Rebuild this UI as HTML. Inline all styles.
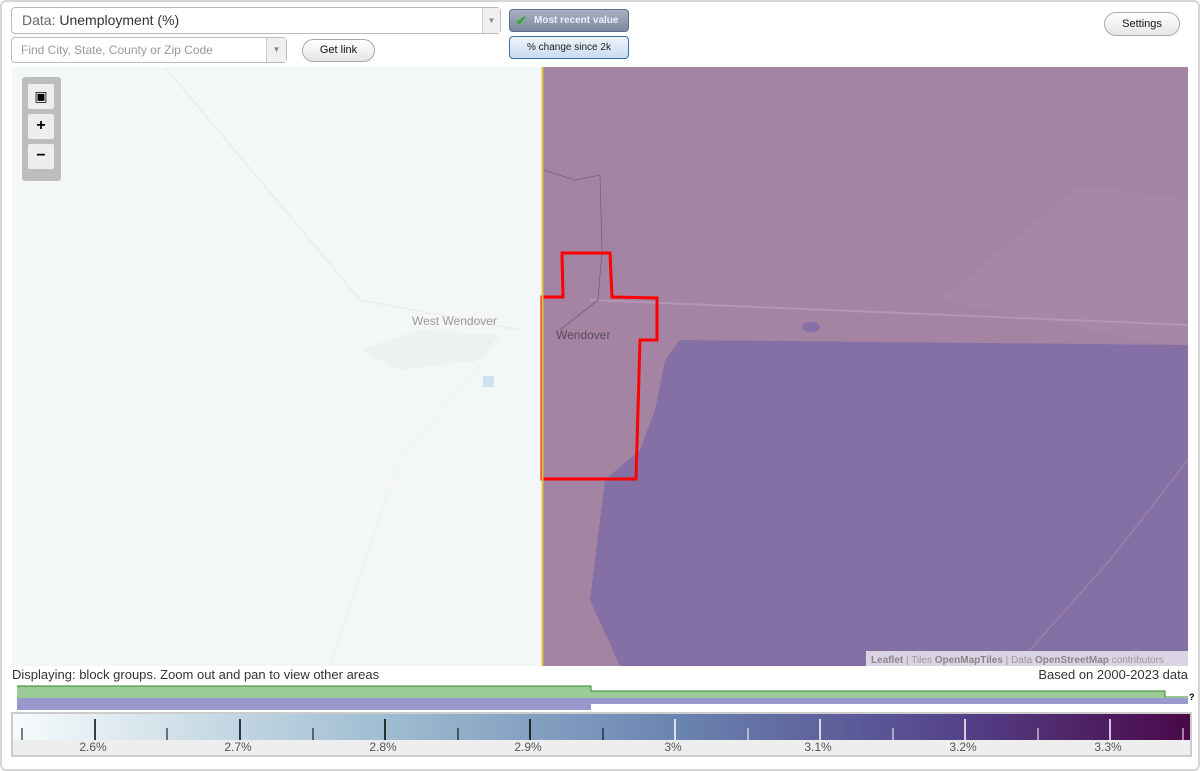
<!DOCTYPE html>
<html><head><meta charset="utf-8"><style>
*{box-sizing:border-box}
body{margin:0;width:1200px;height:771px;background:#fff;font-family:"Liberation Sans",sans-serif;position:relative;overflow:hidden}
.frame{position:absolute;left:0;top:0;width:1200px;height:771px;border:2px solid #d6d6d6;border-radius:6px}
.sel{position:absolute;background:#fff;border:1px solid #bbb;border-radius:4px;font-size:14px;color:#333}
.arr{position:absolute;right:0;top:0;bottom:0;width:18px;border-left:1px solid #ccc;background:#f0f0f0;color:#888;font-size:8px;text-align:center}
.btn{position:absolute;border:1px solid #aaa;border-radius:13px;background:linear-gradient(#fff,#e6e6e6);font-size:11px;text-align:center;color:#111}
.t{position:absolute;font-size:13px;color:#333}
</style></head><body>
<div class="frame"></div>
<div class="sel" style="left:11px;top:7px;width:490px;height:27px;line-height:25px;padding-left:10px;font-size:14px"><span style="color:#666">Data:</span> Unemployment (%)<div class="arr" style="line-height:25px">▼</div></div>
<div class="sel" style="left:11px;top:37px;width:276px;height:26px;line-height:24px;padding-left:9px;font-size:12px;color:#999">Find City, State, County or Zip Code<div class="arr" style="line-height:24px;width:20px">▼</div></div>
<div class="btn" style="left:302px;top:39px;width:73px;height:23px;line-height:21px">Get link</div>
<div style="position:absolute;left:509px;top:9px;width:120px;height:23px;border:1px solid #5a6e8a;border-radius:4px;background:linear-gradient(#a9b2c2,#7d889c);color:#eef;font-size:10px;font-weight:bold;line-height:21px;padding-left:24px">Most recent value<span style="position:absolute;left:6px;top:0;color:#3a3;font-size:13px">✔</span></div>
<div style="position:absolute;left:509px;top:36px;width:120px;height:23px;border:1px solid #3a6fa8;border-radius:4px;background:linear-gradient(#eef4fb,#c9dbef);color:#222;font-size:10px;line-height:21px;text-align:center">% change since 2k</div>
<div class="btn" style="left:1104px;top:12px;width:76px;height:24px;line-height:22px">Settings</div>

<svg style="position:absolute;left:12px;top:67px" width="1176" height="599" viewBox="12 67 1176 599">
<rect x="12" y="67" width="1176" height="599" fill="#f4f7f8"/>
<path d="M165 67 L360 300 L520 330" stroke="#eceff0" stroke-width="2" fill="none"/>
<path d="M500 340 L400 460 L330 666" stroke="#eff1f2" stroke-width="1.5" fill="none"/>
<rect x="483" y="376" width="11" height="11" fill="#cfe0ee"/>
<path d="M360 350 L420 330 L500 335 L480 360 L400 370 Z" fill="#eef1f2"/>
<rect x="542" y="67" width="646" height="599" fill="#a583a3"/>
<path d="M940 300 L1080 185 L1188 200 L1188 350 Z" fill="#a886a6"/>
<path d="M680 340 L1188 345 L1188 666 L620 666 L590 600 L605 480 L640 450 L655 410 L665 360 Z" fill="#8470a5"/>
<path d="M1188 460 L1110 560 L1030 650" stroke="#9a80a6" stroke-width="1.5" fill="none"/>
<path d="M590 300 L1188 325" stroke="#b497b2" stroke-width="2" fill="none"/>
<ellipse cx="811" cy="327" rx="9" ry="5" fill="#8470a5"/>
<path d="M543 170 L575 180 L600 175 L602 250 L598 300 L560 330" stroke="#7c5d7c" stroke-width="0.8" fill="none"/>
<path d="M562 253 L610 253 L612 297 L657 298 L657 340 L640 340 L636 479 L542 479 L542 297 L563 297 Z" fill="none" stroke="#f00" stroke-width="3"/>
<line x1="542.5" y1="67" x2="542.5" y2="666" stroke="#e0c23a" stroke-width="2"/>
<text x="412" y="325" font-size="12" fill="#999" font-family="Liberation Sans">West Wendover</text>
<text x="556" y="339" font-size="12" fill="#5a4a5a" font-family="Liberation Sans">Wendover</text>
<rect x="866" y="651" width="322" height="15" fill="rgba(255,255,255,0.7)"/>
<text x="871" y="663" font-size="10" fill="#999" font-family="Liberation Sans"><tspan font-weight="bold" fill="#888">Leaflet</tspan> | Tiles <tspan font-weight="bold" fill="#888">OpenMapTiles</tspan> | Data <tspan font-weight="bold" fill="#888">OpenStreetMap</tspan> contributors</text>
</svg>
<div style="position:absolute;left:22px;top:77px;width:39px;height:104px;background:#bdbdbd;border-radius:3px"></div>
<div style="position:absolute;left:28px;top:84px;width:26px;height:25px;background:#eee;border-radius:2px;text-align:center;line-height:25px;font-size:14px">▣</div>
<div style="position:absolute;left:28px;top:114px;width:26px;height:25px;background:#eee;border-radius:2px;text-align:center;line-height:24px;font-size:16px;font-weight:bold">+</div>
<div style="position:absolute;left:28px;top:144px;width:26px;height:25px;background:#eee;border-radius:2px;text-align:center;line-height:23px;font-size:16px;font-weight:bold">−</div>

<div class="t" style="left:12px;top:667px">Displaying: block groups. Zoom out and pan to view other areas</div>
<div class="t" style="right:12px;top:667px">Based on 2000-2023 data</div>
<svg style="position:absolute;left:0;top:680px" width="1200" height="35">
<rect x="17" y="6" width="574" height="12" fill="#9bcc98"/>
<rect x="591" y="11" width="574" height="7" fill="#9bcc98"/>
<path d="M17 6 H591 V11 H1165 V17 H1188" stroke="#2e8a2a" fill="none"/>
<rect x="17" y="18" width="574" height="12" fill="#9a98cc"/>
<rect x="591" y="18" width="597" height="6" fill="#9a98cc"/>
<text x="1189" y="20" font-size="9" font-weight="bold" font-family="Liberation Sans">?</text>
</svg>
<div style="position:absolute;left:11px;top:712px;width:1181px;height:45px;border:2px solid #ccc;background:#eee"></div>
<svg style="position:absolute;left:13px;top:714px" width="1177" height="42">
<defs><linearGradient id="g"><stop offset="0" stop-color="#f7fbfc"/><stop offset="0.3" stop-color="#a3c0d4"/><stop offset="0.55" stop-color="#6c88b3"/><stop offset="0.8" stop-color="#54438a"/><stop offset="1" stop-color="#4a0848"/></linearGradient></defs>
<rect x="0" y="0" width="1177" height="26" fill="url(#g)"/>
<g stroke-width="1.5">
<line x1="82" y1="5" x2="82" y2="26" stroke="#000"/><line x1="227" y1="5" x2="227" y2="26" stroke="#000"/><line x1="372" y1="5" x2="372" y2="26" stroke="#000"/><line x1="517" y1="5" x2="517" y2="26" stroke="#000"/>
<line x1="662" y1="5" x2="662" y2="26" stroke="#fff"/><line x1="807" y1="5" x2="807" y2="26" stroke="#fff"/><line x1="952" y1="5" x2="952" y2="26" stroke="#fff"/><line x1="1097" y1="5" x2="1097" y2="26" stroke="#fff"/>
</g>
<g stroke-width="1">
<line x1="9" y1="14" x2="9" y2="26" stroke="#000"/><line x1="154" y1="14" x2="154" y2="26" stroke="#000"/><line x1="300" y1="14" x2="300" y2="26" stroke="#000"/><line x1="445" y1="14" x2="445" y2="26" stroke="#000"/><line x1="590" y1="14" x2="590" y2="26" stroke="#000"/>
<line x1="735" y1="14" x2="735" y2="26" stroke="#fff"/><line x1="880" y1="14" x2="880" y2="26" stroke="#fff"/><line x1="1025" y1="14" x2="1025" y2="26" stroke="#fff"/><line x1="1170" y1="14" x2="1170" y2="26" stroke="#fff"/>
</g>
<g font-size="12" fill="#555" text-anchor="middle" font-family="Liberation Sans">
<text x="80" y="37">2.6%</text><text x="225" y="37">2.7%</text><text x="370" y="37">2.8%</text><text x="515" y="37">2.9%</text><text x="660" y="37">3%</text><text x="805" y="37">3.1%</text><text x="950" y="37">3.2%</text><text x="1095" y="37">3.3%</text>
</g>
</svg>
</body></html>
